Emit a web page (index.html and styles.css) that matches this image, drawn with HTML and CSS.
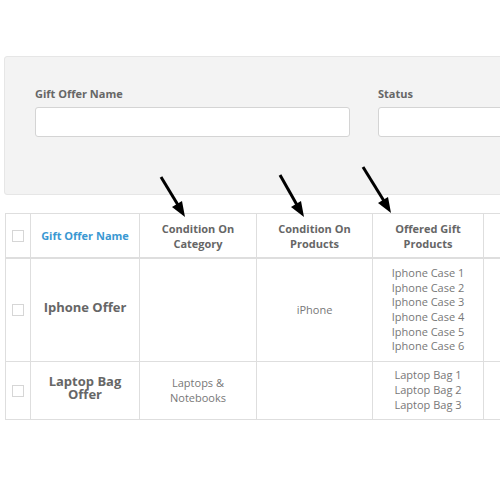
FILE: index.html
```html
<!DOCTYPE html>
<html>
<head>
<meta charset="utf-8">
<link rel="stylesheet" href="styles.css">
</head>
<body>
<div class="page">
  <div class="filters">
    <div class="field">
      <label class="flabel">Gift Offer Name</label>
      <div class="input"></div>
    </div>
    <div class="field">
      <label class="flabel">Status</label>
      <div class="input"></div>
    </div>
  </div>

  <table class="grid">
    <colgroup>
      <col class="c-check">
      <col class="c-name">
      <col class="c-cat">
      <col class="c-prod">
      <col class="c-gift">
      <col class="c-rest">
    </colgroup>
    <thead>
      <tr>
        <th><span class="box"></span></th>
        <th class="sort">Gift Offer Name</th>
        <th>Condition On<br>Category</th>
        <th>Condition On<br>Products</th>
        <th>Offered Gift<br>Products</th>
        <th></th>
      </tr>
    </thead>
    <tbody>
      <tr class="r1">
        <td><span class="box"></span></td>
        <td class="name">Iphone Offer</td>
        <td></td>
        <td>iPhone</td>
        <td>Iphone Case 1<br>Iphone Case 2<br>Iphone Case 3<br>Iphone Case 4<br>Iphone Case 5<br>Iphone Case 6</td>
        <td></td>
      </tr>
      <tr class="r2">
        <td><span class="box"></span></td>
        <td class="name">Laptop Bag<br>Offer</td>
        <td>Laptops &amp;<br>Notebooks</td>
        <td></td>
        <td>Laptop Bag 1<br>Laptop Bag 2<br>Laptop Bag 3</td>
        <td></td>
      </tr>
    </tbody>
  </table>

  <svg class="arrows" width="500" height="500" viewBox="0 0 500 500">
    <g stroke="#000" stroke-width="3" stroke-linecap="butt" fill="#000">
      <line x1="161" y1="177" x2="178" y2="205"/>
      <polygon points="185,217 172,207 182,201" stroke="none"/>
      <line x1="280" y1="175" x2="297" y2="205"/>
      <polygon points="304,217 291,207 301,201" stroke="none"/>
      <line x1="363" y1="167" x2="384" y2="201"/>
      <polygon points="391,213 378,203 388,197" stroke="none"/>
    </g>
  </svg>
</div>
</body>
</html>
```

FILE: styles.css
```css
html, body {
  margin: 0;
  padding: 0;
  background: #fff;
  overflow: hidden;
}
body {
  width: 500px;
  height: 500px;
  font-family: "Open Sans", "Liberation Sans", sans-serif;
}
.page {
  position: relative;
  width: 500px;
  height: 500px;
  padding-top: 56px;
  padding-left: 4px;
  box-sizing: border-box;
  overflow: hidden;
}
.filters {
  width: 560px;
  height: 139px;
  box-sizing: border-box;
  background: #f3f3f3;
  border: 1px solid #e6e6e6;
  border-radius: 3px;
  display: flex;
  gap: 28px;
  padding: 29px 0 0 30px;
}
.field {
  display: flex;
  flex-direction: column;
  width: 315px;
  flex: none;
}
.flabel {
  font-size: 11px;
  font-weight: 700;
  color: #666;
  line-height: 15px;
  height: 21px;
}
.input {
  height: 30px;
  box-sizing: border-box;
  background: #fff;
  border: 1px solid #d4d4d4;
  border-radius: 3px;
}
.grid {
  margin-top: 18px;
  margin-left: 1px;
  width: 560px;
  table-layout: fixed;
  border-collapse: collapse;
  font-size: 11px;
  color: #777;
}
.c-check { width: 25px; }
.c-name { width: 109px; }
.c-cat { width: 117px; }
.c-prod { width: 116px; }
.c-gift { width: 111px; }
.grid th, .grid td {
  border: 1px solid #dedede;
  text-align: center;
  vertical-align: middle;
  padding: 0 4px;
}
.grid th {
  height: 43px;
  font-weight: 700;
  color: #666;
  line-height: 15px;
  border-bottom: 2px solid #dedede;
}
.grid th.sort {
  color: #3a98d2;
}
.grid td {
  line-height: 14.7px;
}
.grid tr.r1 td { height: 102px; }
.grid tr.r2 td { height: 57px; }
.grid td.name {
  font-size: 13px;
  font-weight: 700;
  color: #666;
  line-height: 13.5px;
  padding-bottom: 5px;
}
.grid tr.r1 td.name { height: 97px; }
.grid tr.r2 td.name { height: 52px; }
.grid th:first-child, .grid td:first-child {
  padding: 0;
}
.box {
  display: block;
  width: 10px;
  height: 10px;
  margin: 0 auto;
  border: 1px solid #d6d6d6;
  background: #fff;
}
.arrows {
  position: absolute;
  left: 0;
  top: 0;
  pointer-events: none;
}
```
